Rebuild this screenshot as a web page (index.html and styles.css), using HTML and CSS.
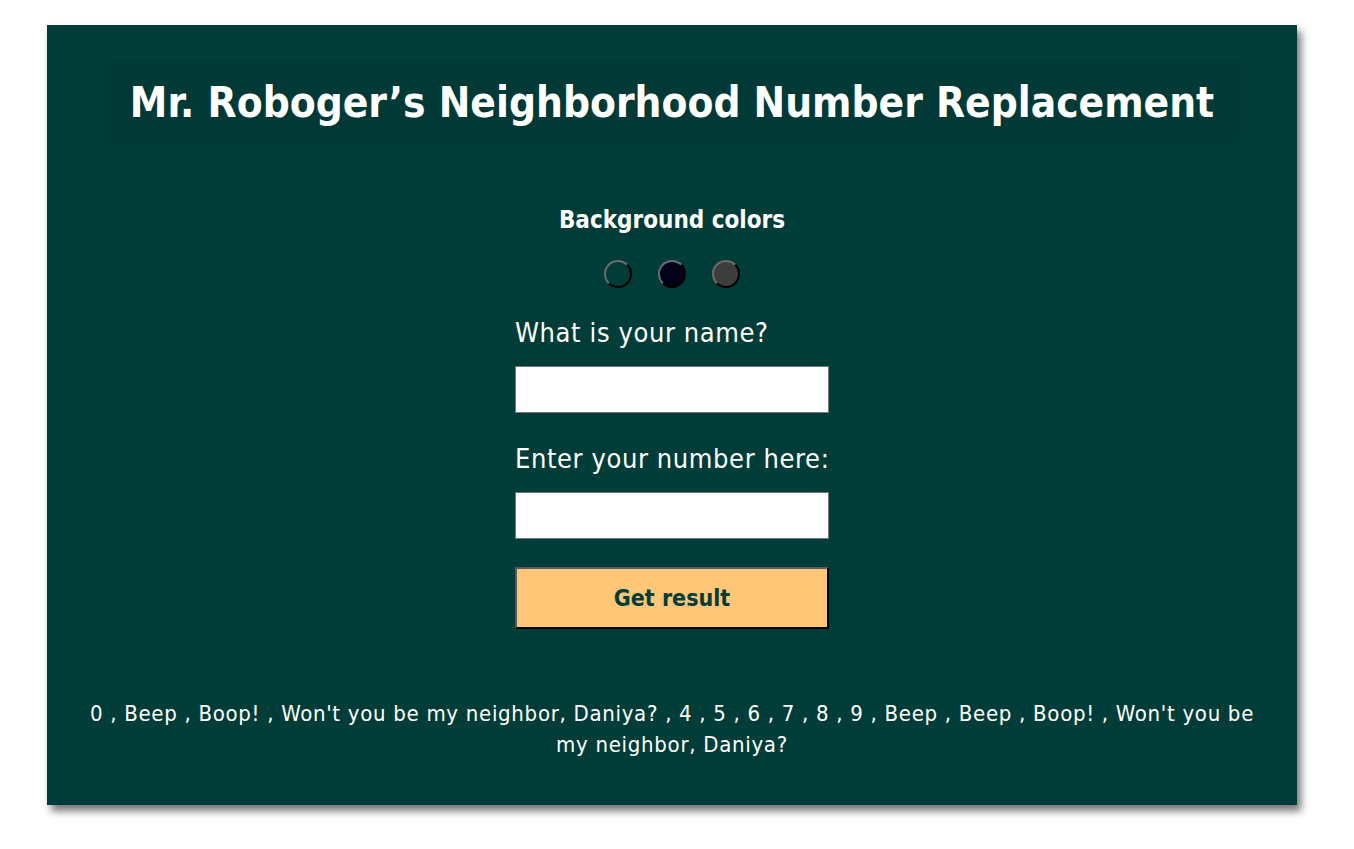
FILE: index.html
```html
<!DOCTYPE html>
<html>
<head>
<meta charset="utf-8">
<link rel="stylesheet" href="styles.css">
</head>
<body>
<div class="card">
  <div class="header">
    <h1 class="title">Mr. Roboger’s Neighborhood Number Replacement</h1>
  </div>
  <div class="form-area">
    <h3 class="bg-title">Background colors</h3>
    <div class="swatches">
      <button class="swatch swatch-green"></button>
      <button class="swatch swatch-navy"></button>
      <button class="swatch swatch-gray"></button>
    </div>
    <form class="form">
      <label class="label">What is your name?</label>
      <input class="field" type="text">
      <label class="label">Enter your number here:</label>
      <input class="field" type="text">
      <button class="submit" type="button">Get result</button>
    </form>
  </div>
  <p class="result">0 , Beep , Boop! , Won't you be my neighbor, Daniya? , 4 , 5 , 6 , 7 , 8 , 9 , Beep , Beep , Boop! , Won't you be my neighbor, Daniya?</p>
</div>
</body>
</html>
```
FILE: styles.css
```css
html, body {
  margin: 0;
  padding: 0;
  background: #ffffff;
}
body {
  padding: 25px 57px 44px 47px;
  font-family: "DejaVu Sans Condensed", "DejaVu Sans", sans-serif;
  color: #ffffff;
}
.card {
  width: 1250px;
  height: 780px;
  box-sizing: border-box;
  background: #003d39;
  box-shadow: 4px 6px 8px rgba(0, 0, 0, 0.55);
  padding: 37px 30px 0 30px;
  display: flex;
  flex-direction: column;
  align-items: center;
}
.header {
  width: 1133px;
  height: 80px;
  background: #003935;
  box-shadow: 0 0 4px rgba(0, 0, 0, 0.12);
  display: flex;
  align-items: center;
  justify-content: center;
}
.title {
  margin: 0;
  font-family: "DejaVu Sans", sans-serif;
  font-stretch: condensed;
  font-size: 42px;
  font-weight: bold;
  white-space: nowrap;
}
.form-area {
  margin-top: 62px;
  display: flex;
  flex-direction: column;
  align-items: center;
}
.bg-title {
  margin: 0;
  font-family: "DejaVu Sans", sans-serif;
  font-stretch: condensed;
  font-size: 24px;
  font-weight: bold;
  line-height: 32px;
}
.swatches {
  display: flex;
  gap: 26px;
  margin-top: 24px;
}
.swatch {
  width: 28px;
  height: 28px;
  border-radius: 50%;
  padding: 0;
  border: 2px solid;
  border-color: #6b6b6b #000 #000 #6b6b6b;
  box-sizing: border-box;
}
.swatch-green { background: transparent; }
.swatch-navy { background: #03001a; }
.swatch-gray { background: #3d3d3d; }
.form {
  width: 314px;
  margin-top: 29px;
  display: flex;
  flex-direction: column;
}
.label {
  font-size: 27px;
  line-height: 32px;
  letter-spacing: 0.6px;
  white-space: nowrap;
}
.field {
  width: 314px;
  height: 47px;
  box-sizing: border-box;
  border: 1px solid #767676;
  background: #fff;
  margin: 17px 0 30px 0;
}
.submit {
  margin-top: -2px;
  height: 62px;
  width: 314px;
  background: #ffc677;
  border: 2px solid;
  border-color: #5a5a5a #000 #000 #5a5a5a;
  color: #003d39;
  font-family: "DejaVu Sans", sans-serif;
  font-stretch: condensed;
  font-size: 23px;
  font-weight: bold;
}
.result {
  margin: 69px 0 0 0;
  text-align: center;
  font-size: 22px;
  line-height: 31px;
  letter-spacing: 0.7px;
  max-width: 1180px;
}
```
